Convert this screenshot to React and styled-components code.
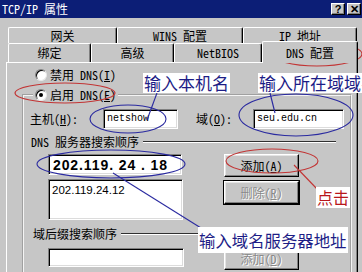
import React from 'react';
import styled, { createGlobalStyle } from 'styled-components';

const UI_FONT = `"Noto Sans Mono CJK SC", "Liberation Mono", "Noto Sans CJK SC", monospace`;
const NOTE_FONT = `"Noto Sans CJK SC", "Noto Sans", sans-serif`;
const FACE = '#c6c6c6';

const Global = createGlobalStyle`
  html, body { margin: 0; padding: 0; background: ${FACE}; }
  body { width: 362px; height: 272px; overflow: hidden; }
  * { box-sizing: border-box; }
`;

const Win = styled.div`
  position: relative;
  width: 362px;
  height: 272px;
  overflow: hidden;
  background: ${FACE};
  font-family: ${UI_FONT};
  font-size: 12px;
  line-height: 14px;
  color: #000;
  display: flex;
  flex-direction: column;
`;

const TitleBar = styled.div`
  height: 18px;
  flex: none;
  background: #0c1e76;
  display: flex;
  align-items: center;
  justify-content: space-between;
  padding: 0 1px 0 2px;
`;

const TitleText = styled.span`
  color: #fff;
  font-size: 12px;
  line-height: 12px;
`;

const TitleButtons = styled.div`
  display: flex;
  gap: 2px;
`;

const CapButton = styled.div`
  width: 14px;
  height: 12px;
  background: ${FACE};
  border: 1px solid;
  border-color: #fff #000 #000 #fff;
  box-shadow: inset -1px -1px #808080;
  display: flex;
  align-items: center;
  justify-content: center;
  font: bold 11px/1 "Liberation Sans", sans-serif;
`;

const Body = styled.div`
  flex: 1;
  display: flex;
  flex-direction: column;
  padding: 9px 0 0 6px;
`;

const TabRow = styled.div`
  display: flex;
  margin-left: 2px;
  height: ${p => p.$h}px;
  position: relative;
  z-index: ${p => p.$z};
`;

const Tab = styled.div`
  flex: none;
  width: ${p => p.$w}px;
  height: ${p => (p.$active ? 22 : p.$h)}px;
  margin-top: ${p => (p.$active ? -2 : 0)}px;
  background: ${FACE};
  border-top: 1px solid #fff;
  border-left: 1px solid #fff;
  border-right: 1px solid #000;
  box-shadow: inset -1px 0 #808080;
  border-radius: 2px 2px 0 0;
  display: flex;
  align-items: ${p => (p.$active ? 'flex-start' : 'center')};
  padding-top: ${p => (p.$active ? 4 : 0)}px;
  justify-content: center;
  white-space: pre;
`;

const Panel = styled.div`
  flex: 1;
  margin-right: 4px;
  border-top: 1px solid #fff;
  border-left: 1px solid #fff;
  border-right: 1px solid #000;
  box-shadow: inset -1px 0 #808080;
  padding: 5px 0 0 0;
  display: flex;
  flex-direction: column;
`;

const RadioRow = styled.label`
  display: flex;
  align-items: center;
  gap: 3px;
  height: 14px;
  margin-left: ${p => p.$ml || 0}px;
  white-space: pre;
`;

const RadioDot = styled.span`
  position: relative;
  flex: none;
  width: 12px;
  height: 12px;
  border-radius: 50%;
  background: #fff;
  border: 1px solid;
  border-color: #808080 #e8e8e8 #e8e8e8 #808080;
  box-shadow: inset 1px 1px #000;
  &::after {
    content: '';
    display: ${p => (p.$on ? 'block' : 'none')};
    position: absolute;
    left: 3px;
    top: 3px;
    width: 4px;
    height: 4px;
    border-radius: 50%;
    background: #000;
  }
`;

const Group = styled.fieldset`
  margin: 6px 5px 0 15px;
  padding: 0;
  border: 2px groove #f4f4f4;
  flex: 1;
  min-width: 0;
  border-bottom: none;
`;

const Legend = styled.legend`
  margin-left: 9px;
  padding: 0 2px;
`;

const HostRow = styled.div`
  display: flex;
  align-items: center;
  margin-top: 7px;
  padding-left: 6px;
  height: 20px;
`;

const FieldLabel = styled.span`
  flex: none;
  width: ${p => p.$w}px;
  margin-left: ${p => p.$ml || 0}px;
  white-space: pre;
`;

const TextBox = styled.div`
  flex: none;
  width: ${p => p.$w}px;
  height: ${p => p.$h}px;
  background: #fff;
  border: 1px solid;
  border-color: #808080 #fff #fff #808080;
  box-shadow: inset 1px 1px #000, inset -1px -1px #dcdcdc;
  padding: 0 3px;
  display: flex;
  align-items: ${p => (p.$top ? 'flex-start' : 'center')};
  padding-top: ${p => (p.$top ? 3 : 0)}px;
  white-space: pre;
  font-family: "Liberation Mono", monospace;
  font-size: 10px;
`;

const IpBox = styled(TextBox)`
  font: bold 14px "Liberation Sans", sans-serif;
  letter-spacing: 0.9px;
  padding-left: 4px;
`;

const ListText = styled.span`
  font-family: "Liberation Sans", sans-serif;
  font-size: 11.5px;
`;

const SectionHead = styled.div`
  display: flex;
  align-items: center;
  margin-top: ${p => p.$mt}px;
  padding-left: ${p => p.$pl}px;
  height: 14px;
`;

const HeadLine = styled.div`
  flex: 1;
  margin: 0 14px 0 4px;
  height: 2px;
  border-top: 1px solid #303030;
  border-bottom: 1px solid #fff;
`;

const Section = styled.div`
  display: flex;
  align-items: flex-start;
  margin-top: ${p => p.$mt}px;
  padding-left: 24px;
`;

const Column = styled.div`
  display: flex;
  flex-direction: column;
  gap: 4px;
  width: ${p => p.$w}px;
  margin-left: ${p => p.$ml || 0}px;
`;

const Button = styled.div`
  width: 75px;
  height: ${p => p.$h || 23}px;
  background: ${FACE};
  border: 1px solid;
  border-color: #fff #000 #000 #fff;
  box-shadow: inset -1px -1px #808080, inset 1px 1px #e4e4e4;
  outline: ${p => (p.$framed ? '1px solid #000' : 'none')};
  display: flex;
  align-items: center;
  justify-content: center;
  white-space: pre;
  color: ${p => (p.$disabled ? '#8a8a8a' : '#000')};
  text-shadow: ${p => (p.$disabled ? '1px 1px #fff' : 'none')};
`;

const Overlay = styled.svg`
  position: absolute;
  left: 0;
  top: 0;
  width: 362px;
  height: 272px;
  pointer-events: none;
`;

const Note = styled.div`
  position: absolute;
  left: ${p => p.$x}px;
  top: ${p => p.$y}px;
  height: ${p => p.$h}px;
  padding: 0 ${p => p.$px || 1}px;
  background: #fff;
  color: ${p => (p.$red ? '#b8161b' : '#1d1d86')};
  font-family: ${NOTE_FONT};
  font-size: ${p => p.$fs}px;
  line-height: ${p => p.$h}px;
  white-space: nowrap;
`;

const row1 = [
  ['网关', 109],
  ['WINS 配置', 126],
  ['IP 地址', 114],
];
const row2 = [
  ['绑定', 83],
  ['高级', 83],
  ['NetBIOS', 88],
  ['DNS 配置', 96, true],
];

export default function App() {
  return (
    <>
      <Global />
      <Win>
        <TitleBar>
          <TitleText>TCP/IP 属性</TitleText>
          <TitleButtons>
            <CapButton>?</CapButton>
            <CapButton>✕</CapButton>
          </TitleButtons>
        </TitleBar>
        <Body>
          <TabRow $h={16} $z={1}>
            {row1.map(([t, w]) => (
              <Tab key={t} $w={w} $h={16}>{t}</Tab>
            ))}
          </TabRow>
          <TabRow $h={19} $z={3}>
            {row2.map(([t, w, a]) => (
              <Tab key={t} $w={w} $h={19} $active={a}>{t}</Tab>
            ))}
          </TabRow>
          <Panel>
            <RadioRow $ml={28}>
              <RadioDot />
              <span>禁用 DNS(<u>I</u>)</span>
            </RadioRow>
            <Group>
              <Legend>
                <RadioRow>
                  <RadioDot $on />
                  <span>启用 DNS(<u>E</u>)</span>
                </RadioRow>
              </Legend>
              <HostRow>
                <FieldLabel $w={73}>主机(<u>H</u>):</FieldLabel>
                <TextBox $w={75} $h={20}>netshow</TextBox>
                <FieldLabel $w={57} $ml={18}>域(<u>O</u>):</FieldLabel>
                <TextBox $w={91} $h={20}>seu.edu.cn</TextBox>
              </HostRow>
              <SectionHead $mt={6} $pl={7}>
                <span>DNS 服务器搜索顺序</span>
                <HeadLine />
              </SectionHead>
              <Section $mt={5}>
                <Column $w={134}>
                  <IpBox $w={134} $h={21}>202.119. 24 . 18</IpBox>
                  <TextBox $w={135} $h={41} $top>
                    <ListText>202.119.24.12</ListText>
                  </TextBox>
                </Column>
                <Column $w={75} $ml={42}>
                  <Button>添加(<u>A</u>)</Button>
                  <Button $disabled $framed>删除(<u>R</u>)</Button>
                </Column>
              </Section>
              <SectionHead $mt={7} $pl={9}>
                <span>域后缀搜索顺序</span>
                <HeadLine />
              </SectionHead>
              <Section $mt={7}>
                <Column $w={136}>
                  <TextBox $w={136} $h={19} />
                </Column>
                <Column $w={75} $ml={40}>
                  <Button $disabled $h={22}>添加(<u>D</u>)</Button>
                </Column>
              </Section>
            </Group>
          </Panel>
        </Body>

        <Overlay viewBox="0 0 362 272">
          <g fill="none" strokeWidth="1.1">
            <ellipse cx="317" cy="54" rx="45" ry="12" stroke="#c23434" />
            <ellipse cx="65" cy="93" rx="50" ry="10" stroke="#c23434" />
            <ellipse cx="272" cy="161" rx="46" ry="12" stroke="#c23434" />
            <line x1="294" y1="165" x2="318" y2="190" stroke="#c23434" />
            <ellipse cx="128" cy="119" rx="38" ry="14" stroke="#2a2aa0" />
            <ellipse cx="296" cy="115" rx="57" ry="21" stroke="#2a2aa0" />
            <ellipse cx="111" cy="164" rx="74" ry="14" stroke="#2a2aa0" />
            <line x1="157" y1="93" x2="147" y2="120" stroke="#2a2aa0" />
            <line x1="270" y1="93" x2="275" y2="113" stroke="#2a2aa0" />
            <line x1="113" y1="173" x2="201" y2="228" stroke="#2a2aa0" />
          </g>
        </Overlay>
        <Note $x={143} $y={73} $h={20} $fs={17}>输入本机名</Note>
        <Note $x={258} $y={73} $h={20} $fs={17}>输入所在域域名</Note>
        <Note $x={198} $y={227} $h={26} $fs={16.4}>输入域名服务器地址</Note>
        <Note $x={316} $y={187} $h={21} $fs={16} $px={1} $red>点击</Note>
      </Win>
    </>
  );
}
